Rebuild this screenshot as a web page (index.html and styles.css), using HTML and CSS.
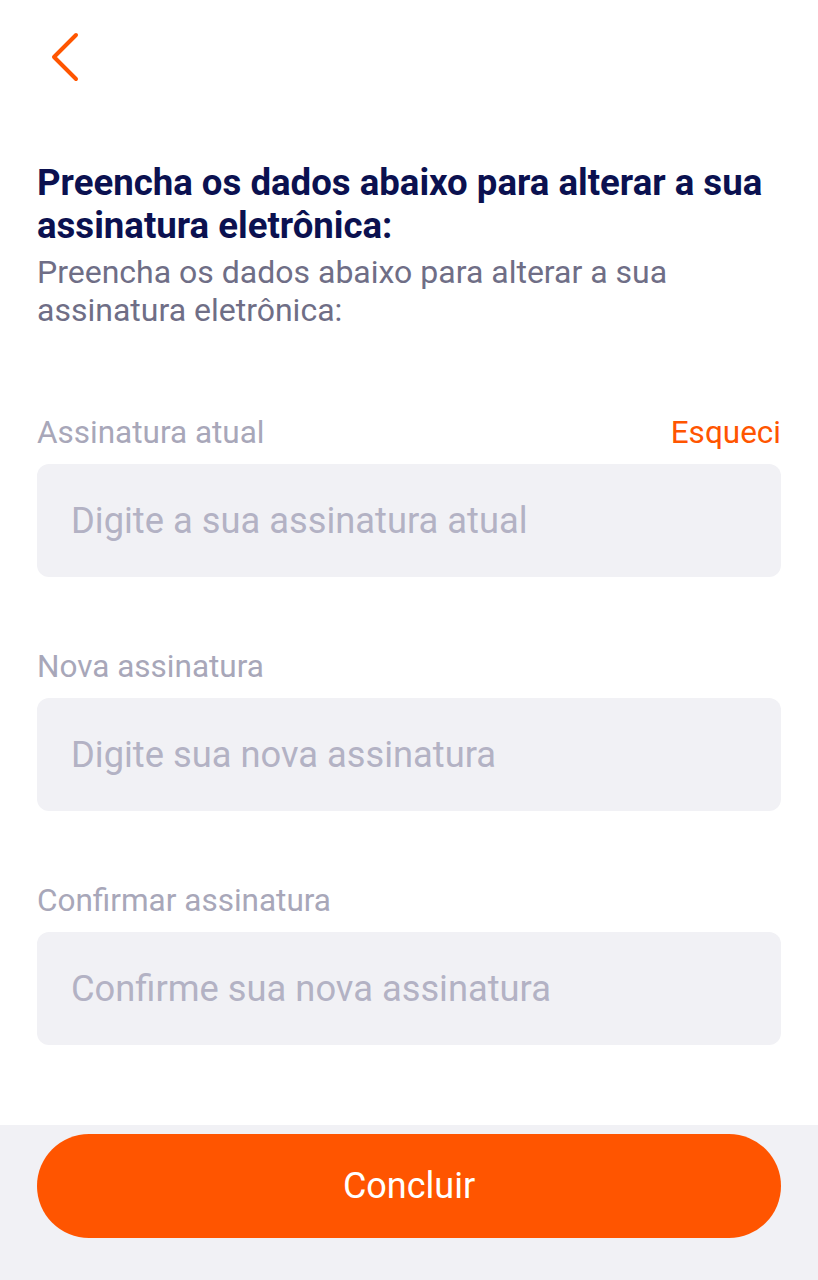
FILE: index.html
```html
<!DOCTYPE html>
<html lang="pt-BR">
<head>
<meta charset="utf-8">
<title>Alterar assinatura eletrônica</title>
<link rel="stylesheet" href="styles.css">
</head>
<body>
<div class="screen">
  <main class="content">
    <button class="back" aria-label="Voltar">
      <svg width="30" height="50" viewBox="0 0 30 50" fill="none">
        <path d="M25 3 L3 25 L25 47" stroke="#FF5500" stroke-width="4" stroke-linecap="round" stroke-linejoin="round"/>
      </svg>
    </button>
    <h1 class="title">Preencha os dados abaixo para alterar a sua assinatura eletrônica:</h1>
    <p class="subtitle">Preencha os dados abaixo para alterar a sua assinatura eletrônica:</p>

    <div class="field first">
      <div class="label-row">
        <span class="label">Assinatura atual</span>
        <span class="link">Esqueci</span>
      </div>
      <div class="input"><span class="placeholder">Digite a sua assinatura atual</span></div>
    </div>

    <div class="field">
      <div class="label-row">
        <span class="label">Nova assinatura</span>
      </div>
      <div class="input"><span class="placeholder">Digite sua nova assinatura</span></div>
    </div>

    <div class="field">
      <div class="label-row">
        <span class="label">Confirmar assinatura</span>
      </div>
      <div class="input"><span class="placeholder">Confirme sua nova assinatura</span></div>
    </div>
  </main>
  <footer class="footer">
    <button class="primary">Concluir</button>
  </footer>
</div>
</body>
</html>
```

FILE: styles.css
```css
* { box-sizing: border-box; }
html, body { margin: 0; padding: 0; background: #ffffff; }
body { font-family: Roboto, "Noto Sans", sans-serif; }

.screen {
  width: 818px;
  height: 1280px;
  display: flex;
  flex-direction: column;
}

.content {
  flex: 1;
  padding: 32px 37px 0 37px;
  display: flex;
  flex-direction: column;
}

.back {
  width: 30px;
  height: 50px;
  padding: 0;
  margin-left: 14px;
  border: none;
  background: none;
  display: block;
}
.back svg { display: block; }

.title {
  margin: 79px 0 0 0;
  font-size: 36.6px;
  line-height: 43px;
  font-weight: 700;
  color: #0B1150;
}

.subtitle {
  margin: 6px 0 0 0;
  font-size: 32px;
  line-height: 38px;
  font-weight: 400;
  color: #6F6E86;
}

.field {
  display: flex;
  flex-direction: column;
  gap: 13px;
  margin-top: 72px;
}
.field.first { margin-top: 86px; }

.label-row {
  display: flex;
  justify-content: space-between;
  align-items: baseline;
  font-size: 31.5px;
  line-height: 36px;
}
.label { color: #A8A7B9; }
.link { color: #FF5500; }

.input {
  height: 113px;
  background: #F1F1F5;
  border-radius: 12px;
  display: flex;
  align-items: center;
  padding: 0 34px;
}
.placeholder {
  font-size: 36.3px;
  color: #B3B2C4;
}

.footer {
  height: 155px;
  background: #F1F1F5;
  padding: 9px 37px 0 37px;
}
.primary {
  width: 100%;
  height: 104px;
  border: none;
  border-radius: 52px;
  background: #FF5500;
  color: #ffffff;
  font-family: Roboto, "Noto Sans", sans-serif;
  font-size: 36px;
  font-weight: 400;
}
```
